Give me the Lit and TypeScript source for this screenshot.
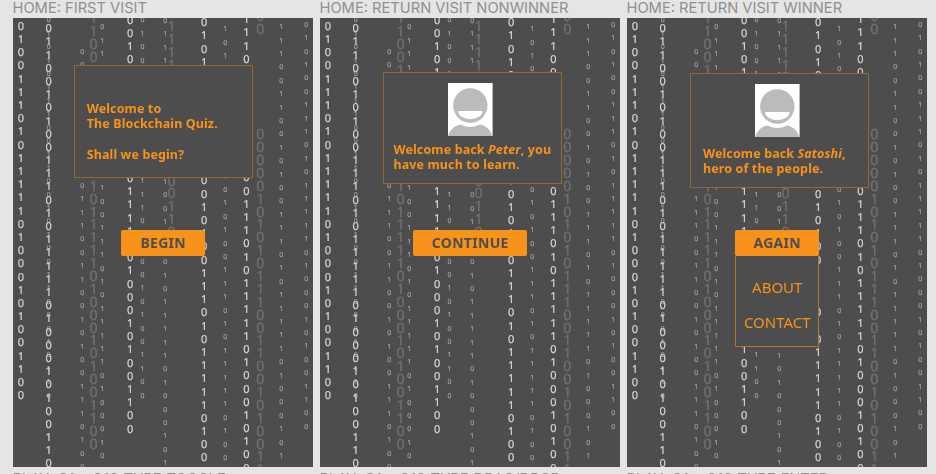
import { LitElement, html, css, svg } from "lit";
import { customElement, property } from "lit/decorators.js";

type Tone = "bright" | "small" | "big";
interface Column { x: number; y: number; tone: Tone; digits: string; }

const PITCH: Record<Tone, number> = { bright: 13.19, small: 13.4, big: 12.89 };
const HALF: Record<Tone, number> = { bright: 3.9, small: 2.4, big: 4.9 };

const COLUMNS: Column[] = [
  { x: 7.8, y: 8, tone: "bright", digits: "01001110101111101000101001100" },
  { x: 35.7, y: 2, tone: "small", digits: "01010111001100101001100010110" },
  { x: 35.7, y: 10.3, tone: "bright", digits: "0110010100111010111110100010100110" },
  { x: 69.3, y: 33.3, tone: "small", digits: "00101100100111001100101001110100" },
  { x: 80.6, y: 0.3, tone: "big", digits: "1100101101001101111101000101001100" },
  { x: 89.2, y: 9, tone: "small", digits: "011101011001100111010111110100010" },
  { x: 117.2, y: 1.8, tone: "bright", digits: "00101011010001111101000101001100" },
  { x: 129.6, y: 2, tone: "small", digits: "01001011010111101000101001100" },
  { x: 152.2, y: 2.5, tone: "small", digits: "0111010010111001100101111101000101" },
  { x: 158.5, y: 8, tone: "big", digits: "11110010110000110" },
  { x: 191.1, y: 4.3, tone: "bright", digits: "0101011010010010100111010111110100" },
  { x: 212.2, y: 10.7, tone: "small", digits: "101001101011010100111010111110100" },
  { x: 233.4, y: 1.3, tone: "bright", digits: "11100101101000111010111110100010100" },
  { x: 247.2, y: -1.7, tone: "big", digits: "00" },
  { x: 247.2, y: 116.3, tone: "big", digits: "000001010101110011001010011" },
  { x: 268.2, y: 8.7, tone: "small", digits: "111001100101001110101111101000101" },
  { x: 293.2, y: 6.3, tone: "small", digits: "0101001110101111101000101001100" },
];

@customElement("digit-rain")
class DigitRain extends LitElement {
  static styles = css`
    :host { display: block; position: absolute; inset: 0; opacity: 0.999; will-change: transform; }
    svg { display: block; width: 100%; height: 100%; }
    text { font-family: "Noto Sans", sans-serif; text-anchor: middle; text-rendering: geometricPrecision; }
    .bright { font-size: 11px; fill: #d8d8d8; stroke: #d8d8d8; stroke-width: 0.2px; }
    .small { font-size: 6.9px; fill: #a4a4a4; stroke: #a4a4a4; stroke-width: 0.16px; }
    .big { font-size: 14.2px; fill: #727272; stroke: #727272; stroke-width: 0.3px; }
  `;
  render() {
    return html`<svg aria-hidden="true">${COLUMNS.map((c) =>
      [...c.digits].map((d, i) => svg`<text class=${c.tone} x=${c.x} y=${c.y + i * PITCH[c.tone] + HALF[c.tone]}>${d}</text>`)
    )}</svg>`;
  }
}

@customElement("quiz-avatar")
class QuizAvatar extends LitElement {
  static styles = css`
    :host { display: block; width: 45px; height: 53px; }
    svg { display: block; }
  `;
  render() {
    return html`<svg width="45" height="53" viewBox="0 0 45 53">
      <rect width="44.6" height="53" fill="#fff"></rect>
      <path d="M0.3 53C2 47 6 42.5 12.5 41.5Q22.3 46.5 32 41.5C38.5 42.5 42.5 47 44.3 53Z" fill="#bbb"></path>
      <circle cx="22.3" cy="22.5" r="17.2" fill="#bbb"></circle>
      <path d="M10.1 28H34.5A12.2 8.2 0 0 1 10.1 28Z" fill="#fff"></path>
    </svg>`;
  }
}

@customElement("quiz-screen")
class QuizScreen extends LitElement {
  @property() kind = "first";

  static styles = css`
    :host { display: block; position: relative; overflow: hidden; height: 449px; background: #4d4d4d;
      font-family: "Noto Sans", sans-serif; color: #f7931a; }
    .stage { position: relative; height: 100%; display: flex; flex-direction: column; align-items: center; will-change: transform; }
    .slot { display: flow-root; height: 212px; width: 100%; flex: none; }
    .card { box-sizing: border-box; width: 178.5px; border: 1px solid #936833; background: #4d4d4d;
      font-weight: 700; font-size: 12.5px; letter-spacing: 0.12px; line-height: 15.5px; white-space: nowrap; }
    .first { margin: 47px 0 0 61.2px; height: 112.5px; padding: 34.5px 0 0 11.5px; }
    .nonwinner { margin: 54px 0 0 63.2px; height: 112px; padding: 10px 0 0 9.3px; }
    .winner { margin: 55.2px 0 0 63.2px; height: 114.5px; padding: 9.8px 0 0 11.8px; }
    .nonwinner quiz-avatar { margin-left: 54.7px; }
    .winner quiz-avatar { margin-left: 52.2px; }
    .copy { margin-top: 5.5px; }
    .first .copy { margin-top: 0; }
    .winner .copy { margin-top: 9px; }
    .gap { height: 15.5px; }
    .button { box-sizing: border-box; height: 25.5px; line-height: 26px; border-radius: 2px; background: #f7931a; color: #4d4d4d;
      font-weight: 700; font-size: 14px; letter-spacing: 0.3px; text-align: center; }
    .w-first, .w-winner { width: 84px; }
    .w-nonwinner { width: 114px; }
    .menu { box-sizing: border-box; width: 84px; height: 91px; border: 1px solid #b1762c; border-top: 0; background: #4d4d4d;
      display: flex; flex-direction: column; align-items: center; padding-top: 14.5px; font-size: 15px; line-height: 34.5px; }
    .menu span { white-space: nowrap; }
  `;

  copy() {
    if (this.kind === "first") return html`<div class="copy"><div>Welcome to</div><div>The Blockchain Quiz.</div><div class="gap"></div><div>Shall we begin?</div></div>`;
    if (this.kind === "nonwinner") return html`<quiz-avatar></quiz-avatar><div class="copy"><div>Welcome back <em>Peter</em>, you</div><div>have much to learn.</div></div>`;
    return html`<quiz-avatar></quiz-avatar><div class="copy"><div>Welcome back <em>Satoshi</em>,</div><div>hero of the people.</div></div>`;
  }

  render() {
    const labels: Record<string, string> = { first: "BEGIN", nonwinner: "CONTINUE", winner: "AGAIN" };
    return html`<digit-rain></digit-rain>
      <div class="stage">
        <div class="slot"><div class="card ${this.kind}">${this.copy()}</div></div>
        <div class="button w-${this.kind}">${labels[this.kind]}</div>
        ${this.kind === "winner" ? html`<div class="menu"><span>ABOUT</span><span>CONTACT</span></div>` : null}
      </div>`;
  }
}

@customElement("app-root")
class AppRoot extends LitElement {
  static styles = css`
    :host { display: block; width: 936px; height: 474px; overflow: hidden; background: #e5e5e5; }
    .board { display: grid; grid-template-columns: repeat(3, 300.5px); column-gap: 6.5px; padding-left: 12.5px; }
    .title { height: 18px; line-height: 16px; font-family: Inter, sans-serif; font-size: 14.68px; color: #909090; white-space: nowrap; }
    .next { height: 7px; overflow: hidden; line-height: 24px; word-spacing: 0.9px; }
  `;
  render() {
    return html`<div class="board">
      <div class="title">HOME: FIRST VISIT</div>
      <div class="title">HOME: RETURN VISIT NONWINNER</div>
      <div class="title">HOME: RETURN VISIT WINNER</div>
      <quiz-screen kind="first"></quiz-screen>
      <quiz-screen kind="nonwinner"></quiz-screen>
      <quiz-screen kind="winner"></quiz-screen>
      <div class="title next">PLAY: Q1 – Q10 TYPE TOGGLE</div>
      <div class="title next">PLAY: Q1 – Q10 TYPE DRAG/DROP</div>
      <div class="title next">PLAY: Q1 – Q10 TYPE ENTER</div>
    </div>`;
  }
}
